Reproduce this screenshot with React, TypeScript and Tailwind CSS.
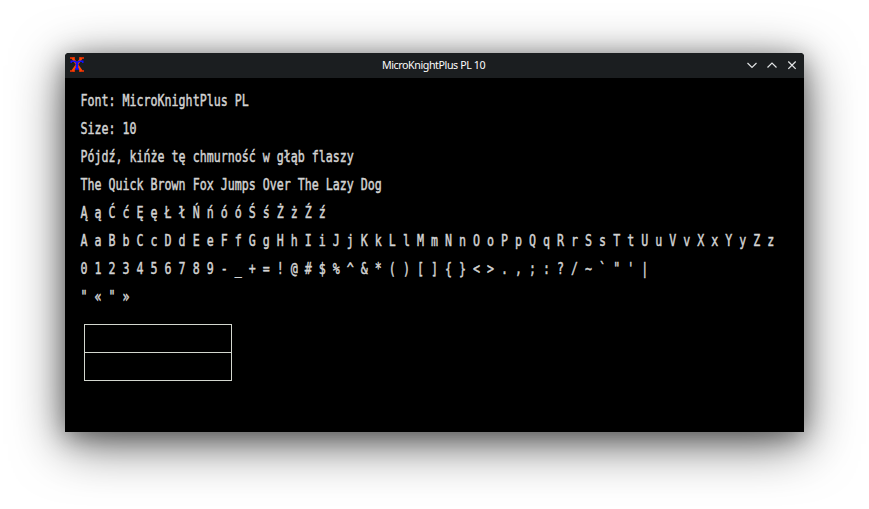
const lines = [
  'Font: MicroKnightPlus PL',
  'Size: 10',
  'Pójdź, kińże tę chmurność w głąb flaszy',
  'The Quick Brown Fox Jumps Over The Lazy Dog',
  'Ą ą Ć ć Ę ę Ł ł Ń ń ó ó Ś ś Ż ż Ź ź',
  'A a B b C c D d E e F f G g H h I i J j K k L l M m N n O o P p Q q R r S s T t U u V v X x Y y Z z',
  '0 1 2 3 4 5 6 7 8 9 - _ + = ! @ # $ % ^ & * ( ) [ ] { } < > . , ; : ? / ~ ` " \' |',
  '" « " »',
];

function AppIcon() {
  return (
    <svg width="16" height="16" viewBox="0 0 16 16" fill="none">
      <path d="M1 1h5M10 1h5M1 14h5M10 14h5" stroke="#ff3300" strokeWidth="1.5" />
      <path d="M3.500 1 12.500 14M12.500 1 3.500 14" stroke="#ff4400" strokeWidth="2.200" />
      <path d="M2.200 6V4.300h3.300L8 5.500l2.500-1.200h3.300V6" stroke="#1010ff" strokeWidth="1.500" />
      <path d="M8 5v7" stroke="#1010ff" strokeWidth="2.500" />
      <path d="M6 12h4" stroke="#1010ff" strokeWidth="1.300" />
    </svg>
  );
}

function WindowControls() {
  return (
    <div className="flex items-center gap-2 pb-px text-[#e0e2e3]">
      <svg width="12" height="12" viewBox="0 0 12 12" fill="none" stroke="currentColor" strokeWidth="1.2">
        <path d="M1.500 4 6 8.500 10.500 4" />
      </svg>
      <svg width="12" height="12" viewBox="0 0 12 12" fill="none" stroke="currentColor" strokeWidth="1.2">
        <path d="M1.500 8.500 6 4 10.500 8.500" />
      </svg>
      <svg width="12" height="12" viewBox="0 0 12 12" fill="none" stroke="currentColor" strokeWidth="1.3">
        <path d="m2.300 2.500 7.400 7.400M9.700 2.500 2.300 9.900" />
      </svg>
    </div>
  );
}

export default function App() {
  return (
    <div className="h-[509px] w-[869px] overflow-hidden bg-white pl-[65px] pt-[53px]">
      <div className="flex h-[379px] w-[739px] flex-col overflow-hidden rounded-t-[4px] bg-black shadow-[0_12px_52px_rgba(0,0,0,0.6),0_5px_24px_rgba(0,0,0,0.35)]">
        <header className="grid h-[25px] shrink-0 grid-cols-[1fr_auto_1fr] items-center bg-[#1b1e20] pl-1 pr-1.5">
          <div className="pb-px">
            <AppIcon />
          </div>
          <h1 className="font-['Noto_Sans',sans-serif] text-[10.700px] leading-[25px] tracking-[-0.420px] text-[#fcfcfc]">
            MicroKnightPlus PL 10
          </h1>
          <div className="flex justify-end">
            <WindowControls />
          </div>
        </header>
        <main className="pl-[15px] pt-2 text-[#d3d3d3]">
          {lines.map((line) => (
            <p
              key={line}
              className="h-7 origin-center scale-y-[1.380] whitespace-pre pl-[0.500px] font-['DejaVu_Sans_Mono',monospace] text-[11.650px] leading-7 [-webkit-text-stroke:0.350px_#d3d3d3]"
            >
              {line}
            </p>
          ))}
          <div className="ml-1 mt-[14px] h-[57px] w-[148px] border border-[#d3d7cf]">
            <div className="h-7 border-b border-[#d3d7cf]" />
          </div>
        </main>
      </div>
    </div>
  );
}
